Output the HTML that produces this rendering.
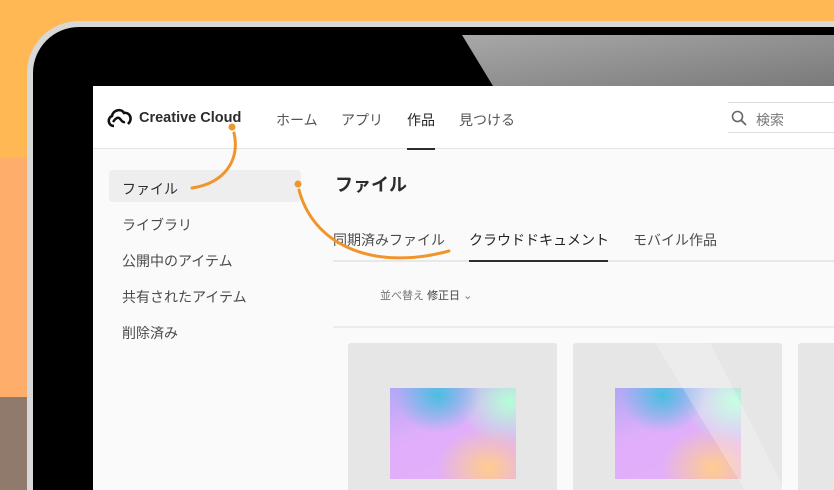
<!DOCTYPE html>
<html><head><meta charset="utf-8"><style>
*{margin:0;padding:0;box-sizing:border-box}
html,body{width:834px;height:490px;overflow:hidden}
body{position:relative;background:#ffb854;font-family:"Liberation Sans","Noto Sans CJK JP",sans-serif}
.a{position:absolute}
.t{position:absolute;white-space:nowrap;font-size:14px;color:#4b4b4b}
.img{position:absolute;width:126px;height:91px;background:
radial-gradient(ellipse 55% 60% at 78% 88%,rgba(255,205,140,1),rgba(255,205,140,0) 75%),
radial-gradient(ellipse 45% 55% at 38% 8%,rgba(75,190,225,1),rgba(75,190,225,0) 75%),
radial-gradient(ellipse 55% 65% at 95% 15%,rgba(180,255,215,1),rgba(180,255,215,0) 75%),
linear-gradient(160deg,#b2a8f5,#dfaefa 40%,#e4b0fa)}
</style></head><body>
<div class="a" style="left:0;top:157px;width:27px;height:240px;background:#ffad6a"></div>
<div class="a" style="left:0;top:397px;width:27px;height:93px;background:#8f7a6b"></div>
<div class="a" style="left:27px;top:21px;width:807px;height:469px;background:#d8d8d8;border-radius:52px 0 0 0"></div>
<div class="a" style="left:33px;top:27px;width:801px;height:463px;background:#000;border-radius:46px 0 0 0"></div>
<svg class="a" style="left:0;top:0" width="834" height="490"><defs><linearGradient id="g" x1="0" y1="0" x2="1" y2="1"><stop offset="0" stop-color="#a8a8a8"/><stop offset="1" stop-color="#7a7a7a"/></linearGradient></defs><polygon points="462,35 834,35 834,86 493,86" fill="url(#g)"/></svg>
<div class="a" style="left:93px;top:86px;width:741px;height:404px;background:#fafafa"></div>
<div class="a" style="left:93px;top:86px;width:741px;height:63px;background:#fff;border-bottom:1px solid #e4e4e4"></div>
<svg class="a" style="left:106px;top:107px" width="26" height="22" viewBox="0 0 26 22"><path d="M8 19 C2 19 1 11 6 9 C7 3 15 1 18 6 C24 5 27 12 22 17" fill="none" stroke="#111" stroke-width="2.6"/><path d="M7 15 C9 12 11 10 13 11 C15 12 16 16 19 15" fill="none" stroke="#111" stroke-width="2.4"/></svg>
<div class="t" style="left:139px;top:110px;font-weight:bold;color:#2c2c2c;font-size:14.5px">Creative Cloud</div>
<div class="t" style="left:276px;top:110px;color:#555">ホーム</div>
<div class="t" style="left:341px;top:110px;color:#555">アプリ</div>
<div class="t" style="left:407px;top:110px;color:#222">作品</div>
<div class="a" style="left:407px;top:148px;width:28px;height:2px;background:#2c2c2c"></div>
<div class="t" style="left:459px;top:110px;color:#555">見つける</div>
<div class="a" style="left:728px;top:102px;width:110px;height:31px;border-top:1px solid #ddd;border-bottom:1px solid #ddd"></div>
<svg class="a" style="left:731px;top:110px" width="16" height="16"><circle cx="6.5" cy="6.5" r="5" fill="none" stroke="#666" stroke-width="1.6"/><path d="M10 10 L15 15" stroke="#666" stroke-width="1.8"/></svg>
<div class="t" style="left:756px;top:110px;color:#777">検索</div>
<div class="a" style="left:109px;top:170px;width:192px;height:32px;background:#eee;border-radius:4px"></div>
<div class="t" style="left:122px;top:179px;color:#2c2c2c">ファイル</div>
<div class="t" style="left:122px;top:215px">ライブラリ</div>
<div class="t" style="left:122px;top:251px">公開中のアイテム</div>
<div class="t" style="left:122px;top:287px">共有されたアイテム</div>
<div class="t" style="left:122px;top:323px">削除済み</div>
<div class="t" style="left:335px;top:171px;font-size:18px;font-weight:bold;color:#2c2c2c">ファイル</div>
<div class="t" style="left:333px;top:230px">同期済みファイル</div>
<div class="t" style="left:469px;top:230px;color:#222">クラウドドキュメント</div>
<div class="t" style="left:633px;top:230px">モバイル作品</div>
<div class="a" style="left:333px;top:260px;width:501px;height:2px;background:#e8e8e8"></div>
<div class="a" style="left:469px;top:260px;width:139px;height:2px;background:#2c2c2c"></div>
<div class="t" style="left:380px;top:287px;font-size:11px;color:#777">並べ替え <span style="color:#444">修正日</span> ⌄</div>
<div class="a" style="left:333px;top:326px;width:501px;height:2px;background:#ececec"></div>
<div class="a" style="left:348px;top:343px;width:209px;height:147px;background:#e6e6e6;border-radius:3px 3px 0 0"></div>
<div class="a" style="left:573px;top:343px;width:209px;height:147px;background:#e6e6e6;border-radius:3px 3px 0 0"></div>
<div class="a" style="left:798px;top:343px;width:36px;height:147px;background:#e6e6e6;border-radius:3px 0 0 0"></div>
<div class="img" style="left:390px;top:388px"></div>
<div class="img" style="left:615px;top:388px"></div>
<svg class="a" style="left:0;top:0" width="834" height="490"><polygon points="655,343 710,343 785,490 745,490" fill="#fff" opacity=".25"/>
<g fill="none" stroke="#f0952a" stroke-width="3" stroke-linecap="round"><path d="M234 133 C240 160 225 183 192 188"/><path d="M299 190 C315 250 380 270 449 251"/></g>
<circle cx="232" cy="127" r="3.5" fill="#f0952a"/><circle cx="298" cy="184" r="3.5" fill="#f0952a"/></svg>
</body></html>
